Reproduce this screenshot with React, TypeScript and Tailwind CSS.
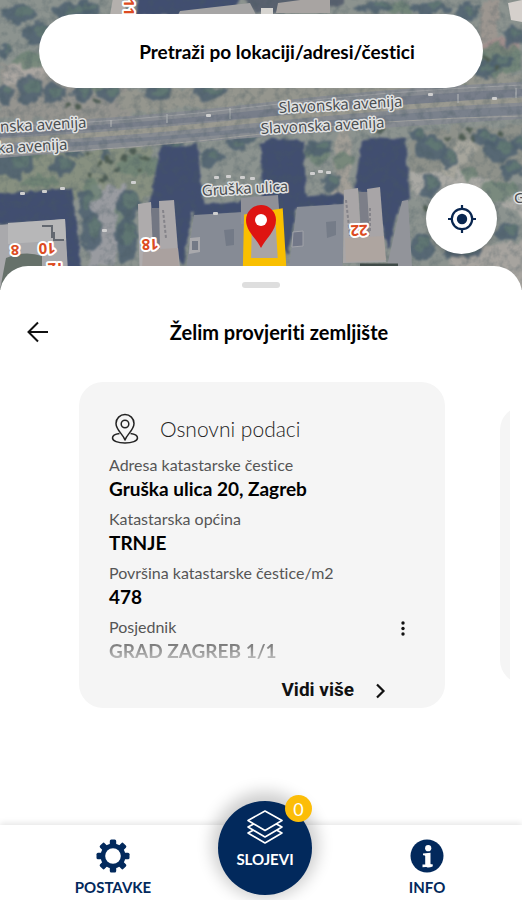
import React from "react";

const fields = [
  { label: "Adresa katastarske čestice", value: "Gruška ulica 20, Zagreb" },
  { label: "Katastarska općina", value: "TRNJE" },
  { label: "Površina katastarske čestice/m2", value: "478" },
];

// [x, y, rx, ry]
const darkTrees = [
  [20, 14, 20, 8], [72, 12, 20, 9], [38, 34, 16, 12], [88, 8, 12, 7], [4, 52, 5, 7],
  [28, 90, 13, 14], [5, 92, 7, 12], [55, 94, 13, 9], [82, 93, 12, 8], [110, 94, 10, 8],
  [158, 93, 14, 8], [208, 93, 17, 7], [14, 165, 20, 13], [62, 166, 11, 9], [72, 152, 9, 6],
  [106, 152, 4, 10], [85, 205, 7, 16], [92, 232, 10, 18], [128, 205, 11, 15], [126, 240, 12, 22],
  [211, 157, 12, 11], [172, 146, 12, 5], [246, 137, 14, 6], [236, 146, 11, 5], [330, 183, 8, 11],
  [318, 148, 14, 8], [430, 148, 15, 13], [448, 158, 11, 8], [418, 135, 9, 6], [500, 150, 18, 11],
  [484, 138, 13, 7], [512, 170, 12, 8], [520, 142, 9, 9], [430, 185, 8, 13], [422, 248, 11, 13],
  [506, 232, 11, 8], [462, 252, 20, 7], [485, 70, 11, 8], [500, 62, 12, 7], [430, 8, 20, 6],
  [375, 7, 20, 5], [468, 12, 10, 10], [514, 36, 10, 10], [478, 45, 4, 9],
];

const lightTrees = [
  [62, 46, 10, 18], [30, 60, 16, 8], [98, 88, 8, 6], [24, 152, 18, 10], [140, 165, 24, 10],
  [40, 182, 22, 5], [318, 154, 12, 10], [400, 8, 16, 6], [500, 60, 22, 16], [448, 88, 20, 3],
  [92, 190, 8, 12], [124, 222, 10, 24], [344, 160, 10, 8], [500, 190, 18, 12], [470, 175, 8, 5],
];

const shrubs = [
  [66, 105], [78, 106], [96, 102], [88, 152], [100, 163], [110, 160], [125, 157], [133, 152],
  [146, 160], [92, 175], [104, 178], [118, 170], [140, 168], [380, 132], [450, 138], [462, 136],
  [474, 139], [470, 130], [500, 134], [484, 60], [497, 68], [448, 215], [428, 210],
];

const cars = [
  [206, 114], [428, 93], [492, 97], [131, 181], [214, 176], [226, 175], [240, 176], [250, 177],
  [102, 229], [213, 212], [310, 172], [318, 170], [326, 171], [20, 192], [42, 190], [60, 187],
];

const AerialMap = () => (
  <svg
    className="absolute inset-0 h-full w-full"
    viewBox="0 0 522 290"
    preserveAspectRatio="xMidYMin slice"
    role="img"
    aria-label="Karta"
  >
    <defs>
      <filter id="soft" x="-5%" y="-5%" width="110%" height="110%" colorInterpolationFilters="sRGB">
        <feTurbulence type="fractalNoise" baseFrequency="0.09" numOctaves="3" seed="4" result="n" />
        <feDisplacementMap in="SourceGraphic" in2="n" scale="14" xChannelSelector="R" yChannelSelector="G" />
        <feGaussianBlur stdDeviation="0.9" />
      </filter>
      <filter id="shade" x="-5%" y="-5%" width="110%" height="110%" colorInterpolationFilters="sRGB">
        <feTurbulence type="fractalNoise" baseFrequency="0.12" numOctaves="2" seed="2" result="n" />
        <feDisplacementMap in="SourceGraphic" in2="n" scale="5" xChannelSelector="R" yChannelSelector="G" />
        <feGaussianBlur stdDeviation="0.9" />
      </filter>
      <filter id="grain" x="0" y="0" width="100%" height="100%" colorInterpolationFilters="sRGB">
        <feTurbulence type="fractalNoise" baseFrequency="0.12" numOctaves="3" seed="9" />
        <feColorMatrix values="0 0 0 0 0.28  0 0 0 0 0.35  0 0 0 0 0.38  2 0 0 0 -0.85" />
      </filter>
      <filter id="edge">
        <feGaussianBlur stdDeviation="0.6" />
      </filter>
    </defs>

    <rect width="522" height="290" fill="#8c938f" />
    <g filter="url(#soft)">
      <path d="M0 62H130V120H0Z" fill="#95948f" />
      <path d="M6 66L44 60V80L4 84Z" fill="#aba6a1" />
      <path d="M120 90L522 74V92L120 112Z" fill="#95968e" />
      <path d="M-8 155L150 148L160 200L-8 196Z" fill="#879080" />
      <path d="M410 130L530 124V176L410 190Z" fill="#8e918a" />
      <path d="M336 132H351V196H334Z" fill="#a39f97" />
      <path d="M410 172Q470 162 530 202V222Q470 178 412 196Z" fill="#aaa9a4" />
      <path d="M458 142L484 134L456 178L440 172Z" fill="#a6a59c" />
      <path d="M92 188L126 186L112 266H88Z" fill="#999ba0" />
      <path d="M452 250L530 240V290H452Z" fill="#a7a49f" />
      <path d="M480 0L500 0L492 56L478 50Z" fill="#9c9690" />
      <path d="M482 42L520 38V52L482 54Z" fill="#a18f8d" />
      {lightTrees.map(([x, y, rx, ry], i) => (
        <ellipse key={i} cx={x} cy={y} rx={rx} ry={ry} fill="#6a8072" fillOpacity="0.75" />
      ))}
      {darkTrees.map(([x, y, rx, ry], i) => (
        <ellipse key={i} cx={x} cy={y} rx={rx} ry={ry} fill="#4e6070" fillOpacity="0.85" />
      ))}
      {darkTrees.map(([x, y, rx, ry], i) => (
        <ellipse key={i} cx={x + rx / 4} cy={y - ry / 4} rx={rx / 2} ry={ry / 2} fill="#637a73" fillOpacity="0.8" />
      ))}
      {shrubs.map(([x, y], i) => (
        <circle key={i} cx={x} cy={y} r="3" fill="#4e5c52" />
      ))}
    </g>

    {/* avenue */}
    <g filter="url(#edge)">
      <path d="M0 124Q140 118 261 103T522 82V119Q390 127 261 137T0 158Z" fill="#888c92" />
      <path d="M0 131Q140 124 261 110T522 89V96Q390 107 261 117T0 137Z" fill="#787e8a" />
      <path d="M0 146Q140 140 261 127T522 106V114Q390 122 261 132T0 152Z" fill="#7a818c" />
      <path d="M0 141Q140 133 261 120T522 100" stroke="#9b9a91" strokeWidth="5" fill="none" />
      <path d="M0 127Q140 121 261 106T522 85" stroke="#9ea0a3" strokeWidth="1" fill="none" />
      <path d="M0 155Q140 149 261 134T522 116" stroke="#a2a29f" strokeWidth="1" fill="none" />
      <path d="M111 120V127M167 114V123M230 108V119M458 94V103M516 88V98" stroke="#b9bbbb" strokeWidth="1" />
    </g>

    {/* shadows */}
    <g fill="#414e70" filter="url(#shade)">
      <path d="M137 -6H240L236 15H137Z" />
      <path d="M240 -6H345V5L256 14Z" fill="#59616f" />
      <path d="M-4 194L72 188L84 290H66L64 222L-4 224Z" />
      <path d="M160 150L164 144L178 147L198 143L201 186L204 206L192 212L183 265L148 210Z" />
      <path d="M196 206L242 200V214L194 218Z" />
      <path d="M261 143L272 138L304 141L306 196L296 210L288 255L262 215Z" />
      <path d="M300 197L344 193V205L298 208Z" />
      <path d="M362 141L372 137L405 139L410 198L400 206L388 250L374 195L354 190Z" />
    </g>

    <rect width="522" height="290" filter="url(#grain)" opacity="0.4" />

    {/* buildings */}
    <g filter="url(#edge)">
      <path d="M180 11L250 3L256 15H178Z" fill="#a6a5a5" />
      <path d="M278 3L330 -4V13H276Z" fill="#a8a4a2" />
      <path d="M261 8H273V15H261Z" fill="#d7d5d1" />
      <path d="M508 3L522 0V22L511 20Z" fill="#d5d0cc" />
      <path d="M113 -2H122L128 15H110Z" fill="#b4b0ad" />
      <path d="M0 225L65 219L69 290H0Z" fill="#a9a9ac" />
      <path d="M8 223L65 219L66 240L8 244Z" fill="#b7b7b8" />
      <path d="M6 258Q25 250 42 256V290H0Z" fill="#66716a" />
      <path d="M42 226H52V238M54 232V240H64" stroke="#636770" strokeWidth="2" fill="none" />
      <path d="M138 204L151 202L154 248L178 248L182 290H140Z" fill="#aeabac" />
      <path d="M151 208H160V250H153Z" fill="#737783" />
      <path d="M159 201L174 200L178 250H160Z" fill="#aba8aa" />
      <path d="M143 250L178 248L180 290H141Z" fill="#aaa19f" />
      <path d="M194 215L244 212V290H183Z" fill="#868b95" />
      <path d="M190 238L200 237V252L189 254Z" fill="#a9a9ad" />
      <path d="M192 241H198V250H192Z" fill="#737986" />
      <path d="M224 230L234 229V245L226 246Z" fill="#737a87" />
      <path d="M241 198L278 195L280 222L241 224Z" fill="#8f9097" />
      <path d="M297 207L344 204L342 290H286Z" fill="#888d97" />
      <path d="M293 232L303 231V246L292 247Z" fill="#737888" stroke="#a1a3a9" strokeWidth="1" />
      <path d="M326 222L336 221V235L327 238Z" fill="#757c88" />
      <path d="M344 190L358 188L361 236H382L386 262L343 263Z" fill="#a9a6a7" />
      <path d="M359 192H368L370 236H361Z" fill="#7b7e88" />
      <path d="M367 189L380 187L384 238H370Z" fill="#a8a5a7" />
      <path d="M345 238L384 236L386 260L346 262Z" fill="#aea5a0" />
      <path d="M402 201L408 200L412 266H387Z" fill="#92949a" />
      <path d="M360 265H398" stroke="#414b49" strokeWidth="3" />
      {cars.map(([x, y], i) => (
        <rect key={i} x={x} y={y} width="5" height="3" rx="1" fill="#cfcfcf" />
      ))}
      <path d="M370 208V232M346 200L350 236M163 210L166 238" stroke="#85848a" strokeWidth="2" strokeDasharray="3 2" />
    </g>

    {/* selected parcel */}
    <path d="M248 218L279 213L282 262H247Z" fill="#a9a4a4" stroke="#f9bf00" strokeWidth="8" />
    <path d="M261 248C256 238 246 231 246 220A15 15 0 0 1 276 220C276 231 266 238 261 248Z" fill="#de1411" />
    <circle cx="261" cy="220" r="6" fill="#fff" />

    {/* street names */}
    <g
      fontFamily="'Noto Sans', sans-serif"
      fontSize="15"
      fill="#4a4d50"
      stroke="#e1e2e2"
      strokeWidth="3"
      strokeLinejoin="round"
      paintOrder="stroke"
    >
      <text x="279" y="113" transform="rotate(-3 279 113)">Slavonska avenija</text>
      <text x="261" y="134" transform="rotate(-3 261 134)">Slavonska avenija</text>
      <text x="-37" y="134" transform="rotate(-3 -37 134)">Slavonska avenija</text>
      <text x="-56" y="156" transform="rotate(-3 -56 156)">Slavonska avenija</text>
      <text x="202" y="196" transform="rotate(-3 202 196)">Gruška ulica</text>
      <text x="514" y="203">G</text>
    </g>
    <g
      fontFamily="'Noto Sans', sans-serif"
      fontSize="15"
      fontWeight="700"
      fill="#dc4b22"
      stroke="#fff"
      strokeWidth="4"
      strokeLinejoin="round"
      paintOrder="stroke"
      textAnchor="middle"
    >
      <text transform="translate(15 245) rotate(180)">8</text>
      <text transform="translate(47 243) rotate(178)">10</text>
      <text transform="translate(56 263) rotate(178)">12</text>
      <text transform="translate(150 239) rotate(178)">18</text>
      <text transform="translate(359 225) rotate(178)">22</text>
      <text transform="translate(124 7) rotate(90)">11</text>
    </g>
  </svg>
);

const LocationIcon = () => (
  <svg className="h-8 w-8" viewBox="0 0 32 32" fill="none" stroke="#222" strokeWidth="1.5" strokeLinejoin="round">
    <path d="M16 27C14 21 7 17 7 10.500A9 9 0 0 1 25 10.500C25 17 18 21 16 27Z" />
    <circle cx="16" cy="11" r="3.800" />
    <path d="M10.500 20.500C6 21 3.500 23 3.500 25C3.500 28 9 30 16 30S28.500 28 28.500 25C28.500 23 26 21 21.500 20.500" />
  </svg>
);

const GearIcon = () => (
  <svg className="h-[34px] w-[34px]" viewBox="0 0 34 34" fill="#02295c">
    {[0, 45, 90, 135].map((angle) => (
      <rect key={angle} x="13.800" y="0.500" width="6.400" height="33" rx="1.500" transform={`rotate(${angle} 17 17)`} />
    ))}
    <circle cx="17" cy="17" r="12.500" />
    <circle cx="17" cy="17" r="7.800" fill="#fff" />
  </svg>
);

const InfoIcon = () => (
  <svg className="h-[34px] w-[34px]" viewBox="0 0 34 34" fill="#fff">
    <circle cx="17" cy="17" r="16.500" fill="#02295c" />
    <circle cx="18.200" cy="9.200" r="3.100" />
    <path d="M13 14.500L20.500 13.800V24.500Q20.500 26 22.500 25.300V27.300Q20 28.800 17.500 28.500Q15 28 15.200 25V17Q15 16 13 16.200Z" />
    <path d="M12.500 25.500H22.500V27.600L12.500 28.200Z" />
  </svg>
);

const LayersIcon = () => (
  <svg className="h-9 w-10" viewBox="0 0 40 36" fill="#02295c" stroke="#fff" strokeWidth="1.600" strokeLinejoin="round">
    <path d="M3 24L20 15L37 24L20 34Z" />
    <path d="M3 18L20 9L37 18L20 28Z" />
    <path d="M3 11.500L20 2L37 11.500L20 21.500Z" />
  </svg>
);

const App = () => {
  return (
    <div className="flex min-h-screen flex-col bg-white font-[Lato,sans-serif] text-black [font-variant-ligatures:none]">
      {/* Map with search */}
      <header className="relative h-[290px] overflow-hidden px-[39px] pt-[14px]">
        <AerialMap />
        <input
          type="text"
          aria-label="Pretraži"
          placeholder="Pretraži po lokaciji/adresi/čestici"
          className="relative h-[74px] w-full rounded-full bg-white pl-8 text-center text-[19px] font-bold outline-none placeholder:text-black"
        />
        <button
          aria-label="Moja lokacija"
          className="absolute top-[183px] right-[25px] flex h-[71px] w-[71px] items-center justify-center rounded-full bg-white shadow-md"
        >
          <svg className="h-7 w-7" viewBox="0 0 28 28" fill="none" stroke="#09264f" strokeWidth="2.200">
            <circle cx="14" cy="14" r="10.200" />
            <circle cx="14" cy="14" r="5.200" fill="#09264f" stroke="none" />
            <path d="M14 0V5M14 23V28M0 14H5M23 14H28" />
          </svg>
        </button>
      </header>

      {/* Bottom sheet */}
      <main className="relative -mt-6 flex-1 rounded-t-[28px] bg-white">
        <div className="flex justify-center pt-4">
          <div className="h-[6px] w-[38px] rounded-full bg-[#dedede]" />
        </div>
        <div className="relative mt-7 flex h-8 items-center justify-center pl-9">
          <button aria-label="Natrag" className="absolute left-6">
            <svg className="h-7 w-7" viewBox="0 0 28 28" fill="none" stroke="#111" strokeWidth="2">
              <path d="M14 4.500L4.500 14L14 23.500M4.500 14H24" />
            </svg>
          </button>
          <h1 className="text-xl font-bold">Želim provjeriti zemljište</h1>
        </div>

        {/* Parcel cards */}
        <div className="mx-3 mt-[34px] flex items-center gap-[55px] overflow-hidden">
          <section className="ml-[67px] grow rounded-[24px] bg-[#f5f5f5] px-[30px] pt-[31px] pb-1">
            <div className="mb-2 flex items-center gap-[19px]">
              <LocationIcon />
              <h2 className="text-[21px] font-light text-[#222]">Osnovni podaci</h2>
            </div>
            <dl className="flex flex-col gap-[6px]">
              {fields.map((field) => (
                <div key={field.label}>
                  <dt className="text-base leading-[24px] text-[#555]">{field.label}</dt>
                  <dd className="text-[19px] leading-[24px] font-bold">{field.value}</dd>
                </div>
              ))}
              <div className="relative">
                <dt className="text-base leading-[24px] text-[#555]">Posjednik</dt>
                <dd className="bg-linear-to-b from-[#666666] to-[#cccccc] bg-clip-text text-[19px] leading-[24px] font-bold text-transparent">
                  GRAD ZAGREB 1/1
                </dd>
                <button aria-label="Više opcija" className="absolute top-1 right-[2px]">
                  <svg className="h-5 w-5" viewBox="0 0 20 20" fill="#111">
                    <circle cx="10" cy="4" r="1.700" />
                    <circle cx="10" cy="9.500" r="1.700" />
                    <circle cx="10" cy="15" r="1.700" />
                  </svg>
                </button>
              </div>
            </dl>
            <button className="mt-[13px] mr-[25px] ml-auto flex items-center gap-4 font-[Roboto,sans-serif] text-[19px] leading-7 font-bold text-[#111]">
              Vidi više
              <svg className="h-5 w-5" viewBox="0 0 20 20" fill="none" stroke="#111" strokeWidth="2.200">
                <path d="M7 4.500L13.500 11L7 17.500" />
              </svg>
            </button>
          </section>
          <div className="h-[278px] w-[10px] shrink-0 overflow-hidden">
            <div className="h-full w-12 rounded-[24px] bg-[#f5f5f5]" />
          </div>
        </div>
      </main>

      {/* Bottom navigation */}
      <nav className="relative grid h-[75px] grid-cols-[1fr_94px_1fr] bg-white pl-[8px] text-[#02295c] shadow-[0_-2px_6px_rgba(0,0,0,0.1)]">
        <button className="flex flex-col items-center pt-[14px]">
          <GearIcon />
          <span className="mt-1 text-[15px] leading-5 font-bold">POSTAVKE</span>
        </button>
        <button className="relative -mt-6 flex h-[94px] w-[94px] flex-col items-center rounded-full bg-[#02295c] pt-2 text-white shadow-[0_-3px_16px_6px_rgba(0,0,0,0.2)]">
          <LayersIcon />
          <span className="mt-1 text-[15px] leading-5 font-bold">SLOJEVI</span>
          <span className="absolute -top-[6px] right-0 flex h-[27px] w-[27px] items-center justify-center rounded-full bg-[#fcbd08] text-lg">
            0
          </span>
        </button>
        <button className="flex flex-col items-center pt-[14px] pl-5">
          <InfoIcon />
          <span className="mt-1 text-[15px] leading-5 font-bold">INFO</span>
        </button>
      </nav>
    </div>
  );
};

export default App;
